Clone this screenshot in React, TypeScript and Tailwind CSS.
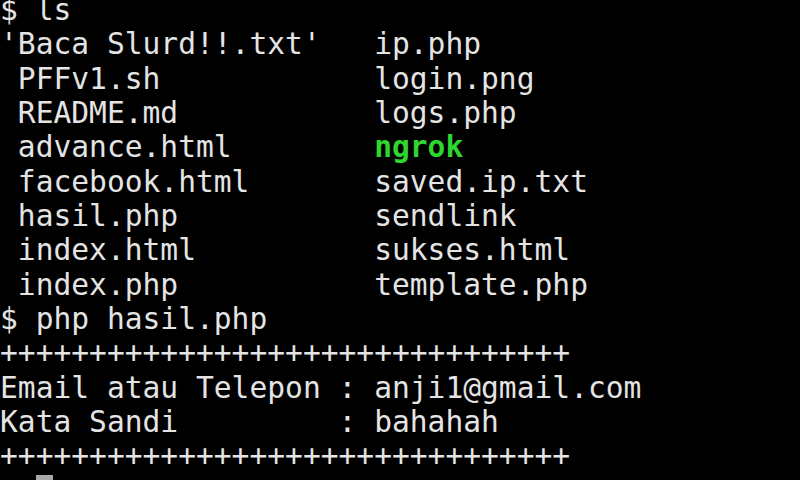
import React from "react";

const mono = { fontFamily: '"DejaVu Sans Mono", "Liberation Mono", monospace' };

function Line({ children }: { children?: React.ReactNode }) {
  return <div className="h-[34.33px] whitespace-pre">{children}</div>;
}

export default function App() {
  const plus = "+".repeat(32);
  return (
    <div className="w-[800px] h-[480px] bg-black overflow-hidden">
      <div
        className="-mt-[7px] text-[29.6px] leading-[34.33px] text-[#e4e4e4] antialiased"
        style={mono}
      >
        <Line>$ ls</Line>
        <Line>{"'Baca Slurd!!.txt'   ip.php"}</Line>
        <Line>{" PFFv1.sh            login.png"}</Line>
        <Line>{" README.md           logs.php"}</Line>
        <Line>
          {" advance.html        "}
          <span className="font-bold text-[#2fd62f]">ngrok</span>
        </Line>
        <Line>{" facebook.html       saved.ip.txt"}</Line>
        <Line>{" hasil.php           sendlink"}</Line>
        <Line>{" index.html          sukses.html"}</Line>
        <Line>{" index.php           template.php"}</Line>
        <Line>$ php hasil.php</Line>
        <Line>{plus}</Line>
        <Line>Email atau Telepon : anji1@gmail.com</Line>
        <Line>{"Kata Sandi         : bahahah"}</Line>
        <Line>{plus}</Line>
        <div className="h-[34.33px] pl-[36px] pt-[1px]">
          <div className="w-[17px] h-[30px] bg-[#a8a8a8]" />
        </div>
      </div>
    </div>
  );
}
